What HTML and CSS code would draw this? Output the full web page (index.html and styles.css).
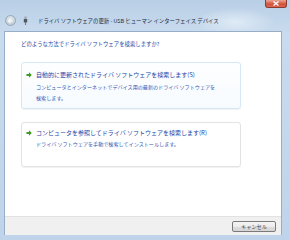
FILE: index.html
```html
<!DOCTYPE html>
<html lang="ja">
<head>
    <meta charset="UTF-8">
    <title>ドライバ ソフトウェアの更新</title>
    <link rel="stylesheet" href="styles.css">
</head>
<body>
    <div class="window">
        <div class="close-button">
            <svg width="8" height="5" viewBox="0 0 8 5"><path d="M1.5 0.5 L6.5 4.5 M6.5 0.5 L1.5 4.5" stroke="#fff" stroke-width="1.3"/></svg>
        </div>
        <div class="titlebar">
            <div class="back-button">
                <svg width="7" height="6" viewBox="0 0 7 6"><path d="M6 3 H1.5 M3.5 1 L1.2 3 L3.5 5" stroke="#f4f7fa" stroke-width="1.2" fill="none"/></svg>
            </div>
            <svg class="usb-icon" width="5" height="9" viewBox="0 0 5 9">
                <rect x="1.5" y="0.5" width="2" height="2.5" fill="#9aa3ad"/>
                <rect x="0.8" y="3" width="3.4" height="3.5" fill="#4e5660"/>
                <rect x="2" y="6.5" width="1" height="2.5" fill="#6b737c"/>
            </svg>
            <span class="title">ドライバ ソフトウェアの更新 - USB ヒューマン インターフェイス デバイス</span>
        </div>
        <div class="frame">
            <div class="content">
                <p class="question">どのような方法でドライバ ソフトウェアを検索しますか?</p>
                <div class="option option-hover">
                    <svg class="arrow" width="6" height="6" viewBox="0 0 6 6"><path d="M0.5 2 H3 V0.3 L5.8 3 L3 5.7 V4 H0.5 Z" fill="#3d9b22"/></svg>
                    <div class="option-text">
                        <div class="option-title">自動的に更新されたドライバ ソフトウェアを検索します(S)</div>
                        <div class="option-desc">コンピュータとインターネットでデバイス用の最新のドライバ ソフトウェアを<br>検索します。</div>
                    </div>
                </div>
                <div class="option option-plain">
                    <svg class="arrow" width="6" height="6" viewBox="0 0 6 6"><path d="M0.5 2 H3 V0.3 L5.8 3 L3 5.7 V4 H0.5 Z" fill="#3d9b22"/></svg>
                    <div class="option-text">
                        <div class="option-title">コンピュータを参照してドライバ ソフトウェアを検索します(R)</div>
                        <div class="option-desc">ドライバ ソフトウェアを手動で検索してインストールします。</div>
                    </div>
                </div>
            </div>
            <div class="footer">
                <button class="cancel-button">キャンセル</button>
            </div>
        </div>
    </div>
</body>
</html>
```

FILE: styles.css
```css
body {
    margin: 0;
    font-family: "Noto Sans CJK JP", "Noto Sans", sans-serif;
}
.window {
    position: relative;
    width: 290px;
    height: 240px;
    display: flex;
    flex-direction: column;
    background:
        radial-gradient(ellipse 40px 14px at 235px 22px, rgba(235, 243, 250, 0.7), rgba(235, 243, 250, 0)),
        linear-gradient(to bottom, #b9cfe6 0%, #c9dbee 14%, #bfd4ea 100%);
    overflow: hidden;
}
.close-button {
    position: absolute;
    top: 0;
    left: 265px;
    width: 22px;
    height: 8px;
    display: flex;
    align-items: center;
    justify-content: center;
    background: linear-gradient(to bottom, #eba594, #d2503a 60%, #dc6c52);
    border: 1px solid #8a3a30;
    border-top: none;
    border-radius: 0 0 3px 3px;
    box-sizing: border-box;
}
.titlebar {
    height: 31px;
    display: flex;
    align-items: center;
    padding: 10px 0 0 5px;
    box-sizing: border-box;
}
.back-button {
    width: 11px;
    height: 11px;
    border-radius: 50%;
    background: radial-gradient(circle at 50% 35%, #e6ecf2, #b4c0cc);
    border: 1px solid #9aa8b6;
    box-sizing: border-box;
    display: flex;
    align-items: center;
    justify-content: center;
}
.usb-icon {
    margin-left: 7px;
}
.title {
    margin-left: 10px;
    font-size: 5.4px;
    color: #1e2a3a;
    white-space: nowrap;
}
.frame {
    flex: 1;
    display: flex;
    flex-direction: column;
    margin: 0 8px 5px 4px;
    border: 1px solid #97aec6;
    border-bottom: none;
}
.content {
    flex: 1;
    background: #fff;
    padding: 8px 0 0 16px;
}
.question {
    margin: 0;
    font-size: 5.4px;
    line-height: 8px;
    color: #2446a6;
}
.option {
    width: 220px;
    box-sizing: border-box;
    display: flex;
    align-items: flex-start;
    padding: 6px 0 0 4px;
    border: 1px solid #e3e3e3;
    border-radius: 3px;
    box-shadow: 0 1px 1px rgba(0, 0, 0, 0.06);
}
.option-hover {
    margin-top: 14px;
    height: 47px;
    border-color: #d4e9f5;
    background: linear-gradient(to bottom, #fdfeff, #f7fbfe);
}
.option-plain {
    margin-top: 13px;
    height: 45px;
    padding-top: 4px;
}
.arrow {
    margin: 3px 4px 0 0;
    flex: none;
}
.option-title {
    font-size: 6px;
    line-height: 11px;
    color: #1c3fa8;
    white-space: nowrap;
}
.option-desc {
    margin-top: 1px;
    font-size: 5.1px;
    line-height: 11px;
    color: #2f55b4;
    white-space: nowrap;
}
.option-plain .option-desc {
    margin-top: 0;
}
.footer {
    height: 18px;
    display: flex;
    align-items: center;
    justify-content: flex-end;
    padding-right: 5px;
    background: #f0f0f0;
    border-top: 1px solid #e2e2e2;
}
.cancel-button {
    width: 44px;
    height: 11px;
    padding: 0;
    font-family: inherit;
    font-size: 5.2px;
    color: #444;
    background: linear-gradient(to bottom, #f4f4f4 0%, #ececec 50%, #dcdcdc 51%, #d6d6d6 100%);
    border: 1px solid #7a7a7a;
    border-radius: 2px;
}
```
